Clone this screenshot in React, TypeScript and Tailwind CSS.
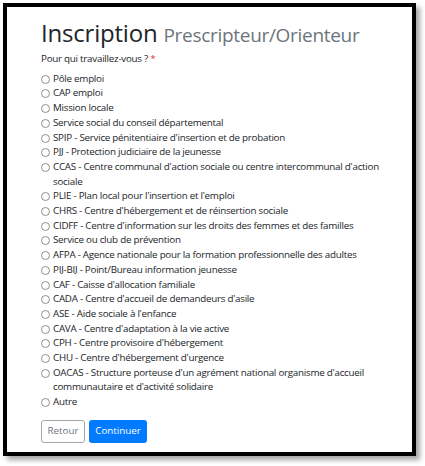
const options: string[] = [
  "Pôle emploi",
  "CAP emploi",
  "Mission locale",
  "Service social du conseil départemental",
  "SPIP - Service pénitentiaire d'insertion et de probation",
  "PJJ - Protection judiciaire de la jeunesse",
  "CCAS - Centre communal d'action sociale ou centre intercommunal d'action sociale",
  "PLIE - Plan local pour l'insertion et l'emploi",
  "CHRS - Centre d'hébergement et de réinsertion sociale",
  "CIDFF - Centre d'information sur les droits des femmes et des familles",
  "Service ou club de prévention",
  "AFPA - Agence nationale pour la formation professionnelle des adultes",
  "PIJ-BIJ - Point/Bureau information jeunesse",
  "CAF - Caisse d'allocation familiale",
  "CADA - Centre d'accueil de demandeurs d'asile",
  "ASE - Aide sociale à l'enfance",
  "CAVA - Centre d'adaptation à la vie active",
  "CPH - Centre provisoire d'hébergement",
  "CHU - Centre d'hébergement d'urgence",
  "OACAS - Structure porteuse d'un agrément national organisme d'accueil communautaire et d'activité solidaire",
  "Autre",
];

export default function App() {
  return (
    <div className="h-[466px] w-[425px] bg-white pl-[3px] pt-[3px] font-['Open_Sans',sans-serif] text-[#212529]">
      <div className="h-[453px] w-[413px] border-4 border-black bg-white pl-[34px] pt-[11px] shadow-[4px_4px_5px_rgba(0,0,0,0.35)]">
        <h1 className="flex items-baseline gap-[6px] leading-[29px]">
          <span className="text-[24px] font-medium tracking-[-0.2px]">Inscription</span>
          <span className="text-[19px] tracking-[-0.3px] text-[#6c757d]">Prescripteur/Orienteur</span>
        </h1>
        <p className="mt-[2px] text-[9.8px] leading-[14.7px] tracking-[-0.25px]">
          Pour qui travaillez-vous ? <span className="text-[#dc3545]">*</span>
        </p>
        <div className="mt-[5px] w-[350px] text-[9.8px] leading-[14.7px] tracking-[-0.25px]">
          {options.map((label) => (
            <label key={label} className="flex items-start">
              <span className="mr-[3px] mt-[3px] h-[9px] w-[9px] shrink-0 rounded-full border border-[#8f8f8f] bg-white" />
              <span>{label}</span>
            </label>
          ))}
        </div>
        <div className="mt-[10px] flex gap-[4px]">
          <button className="h-[23px] w-[44px] rounded-[3px] border border-[#a3a8ad] text-[9.8px] text-[#6c757d]">
            Retour
          </button>
          <button className="h-[23px] w-[58px] rounded-[3px] bg-[#007bff] text-[9.8px] text-white">
            Continuer
          </button>
        </div>
      </div>
    </div>
  );
}
